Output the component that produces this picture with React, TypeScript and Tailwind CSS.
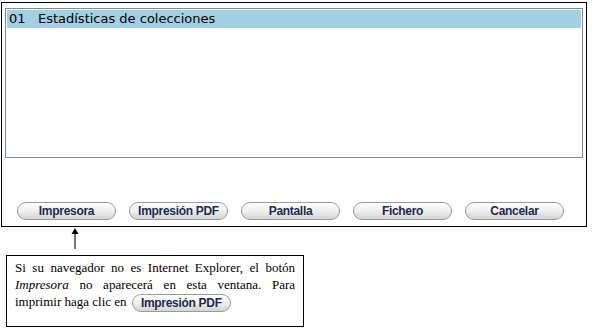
function Boton({ label }: { label: string }) {
  return (
    <button className="w-[99px] h-[18px] rounded-full border border-[#9a9a9a] bg-gradient-to-b from-[#ffffff] via-[#eeeeee] to-[#d4d4d4] text-[12px] font-bold tracking-[-0.3px] text-[#1c2b4c] leading-none font-['Liberation_Sans',Arial,sans-serif] shadow-[inset_0_1px_0_#fff]">
      {label}
    </button>
  );
}

export default function App() {
  return (
    <div className="w-[592px] h-[334px] bg-white relative">
      <div className="absolute left-[1px] top-[2px] w-[586px] h-[225px] border border-black flex flex-col">
        {/* lista */}
        <div className="mx-[3px] mt-[5px] h-[150px] border border-[#7a8b99] p-[1px]">
          <div className="h-[18px] bg-[#a3cfe3] pl-[2px] text-[13px] leading-[18px] text-black font-['DejaVu_Sans',Verdana,sans-serif]">
            01&nbsp;&nbsp;&nbsp;Estadísticas de colecciones
          </div>
        </div>
        {/* botones */}
        <div className="flex gap-[13px] pl-[15px] mt-[44px]">
          <Boton label="Impresora" />
          <Boton label="Impresión PDF" />
          <Boton label="Pantalla" />
          <Boton label="Fichero" />
          <Boton label="Cancelar" />
        </div>
      </div>

      {/* flecha */}
      <svg className="absolute left-[70px] top-[228px]" width="10" height="22" viewBox="0 0 10 22">
        <line x1="5" y1="5" x2="5" y2="21" stroke="#777" strokeWidth="2" />
        <polygon points="5,0 1.5,6 8.5,6" fill="#000" />
      </svg>

      {/* nota */}
      <div className="absolute left-[6px] top-[255px] w-[298px] h-[72px] border border-black px-[8px] pt-[3px] text-[13px] leading-[17px] text-black text-justify font-['Liberation_Serif','Times_New_Roman',serif]">
        Si su navegador no es Internet Explorer, el botón <i>Impresora</i> no aparecerá en esta ventana. Para imprimir haga clic en{" "}
        <span className="inline-block align-middle ml-[2px]">
          <Boton label="Impresión PDF" />
        </span>
      </div>
    </div>
  );
}
